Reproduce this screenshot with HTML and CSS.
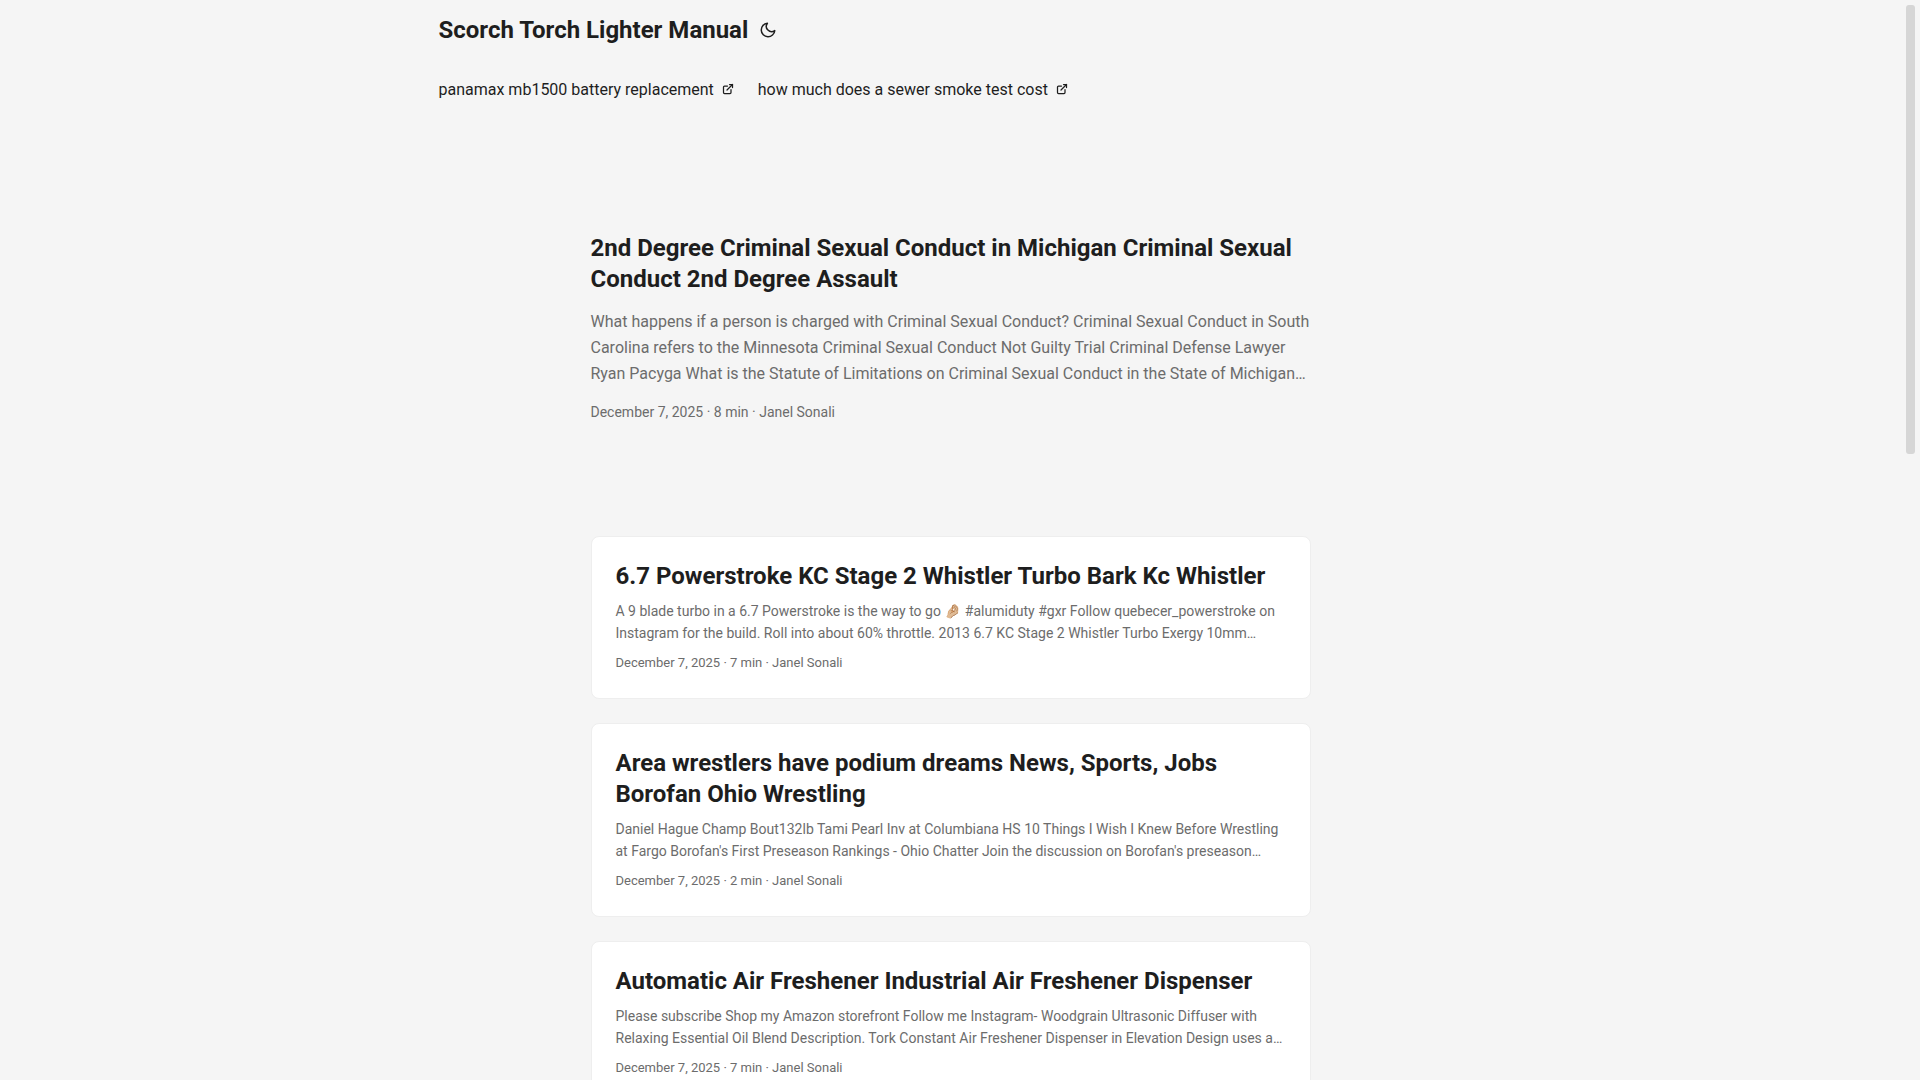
FILE: index.html
```html
<!DOCTYPE html>
<html lang="en">
<head>
<meta charset="utf-8">
<meta name="viewport" content="width=device-width, initial-scale=1">
<title>Scorch Torch Lighter Manual</title>
<link rel="stylesheet" href="styles.css">
</head>
<body>
<div class="page">
  <header class="header">
    <nav class="nav">
      <div class="logo">
        <a href="#">Scorch Torch Lighter Manual</a>
        <button class="theme-toggle" type="button" aria-label="Toggle theme">
          <svg width="18" height="18" viewBox="0 0 24 24" fill="none" stroke="currentColor" stroke-width="2" stroke-linecap="round" stroke-linejoin="round"><path d="M21 12.79A9 9 0 1 1 11.21 3 7 7 0 0 0 21 12.79z"/></svg>
        </button>
      </div>
      <ul class="menu">
        <li><a href="#">panamax mb1500 battery replacement&nbsp;
          <svg width="12" height="12" viewBox="0 0 24 24" fill="none" stroke="currentColor" stroke-width="2.5" stroke-linecap="round" stroke-linejoin="round" shape-rendering="geometricPrecision"><path d="M18 13v6a2 2 0 01-2 2H5a2 2 0 01-2-2V8a2 2 0 012-2h6"/><path d="M15 3h6v6"/><path d="M10 14L21 3"/></svg></a></li>
        <li><a href="#">how much does a sewer smoke test cost&nbsp;
          <svg width="12" height="12" viewBox="0 0 24 24" fill="none" stroke="currentColor" stroke-width="2.5" stroke-linecap="round" stroke-linejoin="round" shape-rendering="geometricPrecision"><path d="M18 13v6a2 2 0 01-2 2H5a2 2 0 01-2-2V8a2 2 0 012-2h6"/><path d="M15 3h6v6"/><path d="M10 14L21 3"/></svg></a></li>
      </ul>
    </nav>
  </header>
  <main class="main">
    <article class="first-entry">
      <h2 class="entry-title"><a href="#">2nd Degree Criminal Sexual Conduct in Michigan Criminal Sexual Conduct 2nd Degree Assault</a></h2>
      <p class="entry-content">What happens if a person is charged with Criminal Sexual Conduct? Criminal Sexual Conduct in South Carolina refers to the Minnesota Criminal Sexual Conduct Not Guilty Trial Criminal Defense Lawyer Ryan Pacyga What is the Statute of Limitations on Criminal Sexual Conduct in the State of Michigan…</p>
      <footer class="entry-footer">December 7, 2025 · 8 min · Janel Sonali</footer>
    </article>
    <article class="post-entry">
      <h2 class="entry-title"><a href="#">6.7 Powerstroke KC Stage 2 Whistler Turbo Bark Kc Whistler</a></h2>
      <p class="entry-content">A 9 blade turbo in a 6.7 Powerstroke is the way to go 🤌🏼 #alumiduty #gxr Follow quebecer_powerstroke on Instagram for the build. Roll into about 60% throttle. 2013 6.7 KC Stage 2 Whistler Turbo Exergy 10mm…</p>
      <footer class="entry-footer">December 7, 2025 · 7 min · Janel Sonali</footer>
    </article>
    <article class="post-entry">
      <h2 class="entry-title"><a href="#">Area wrestlers have podium dreams News, Sports, Jobs Borofan Ohio Wrestling</a></h2>
      <p class="entry-content">Daniel Hague Champ Bout132lb Tami Pearl Inv at Columbiana HS 10 Things I Wish I Knew Before Wrestling at Fargo Borofan's First Preseason Rankings - Ohio Chatter Join the discussion on Borofan's preseason…</p>
      <footer class="entry-footer">December 7, 2025 · 2 min · Janel Sonali</footer>
    </article>
    <article class="post-entry">
      <h2 class="entry-title"><a href="#">Automatic Air Freshener Industrial Air Freshener Dispenser</a></h2>
      <p class="entry-content">Please subscribe Shop my Amazon storefront Follow me Instagram- Woodgrain Ultrasonic Diffuser with Relaxing Essential Oil Blend Description. Tork Constant Air Freshener Dispenser in Elevation Design uses a…</p>
      <footer class="entry-footer">December 7, 2025 · 7 min · Janel Sonali</footer>
    </article>
  </main>
</div>
<div class="scrollbar" aria-hidden="true"><div class="scrollbar-thumb"></div></div>
</body>
</html>
```
FILE: styles.css
```css
:root {
  --gap: 24px;
  --theme: #f5f5f5;
  --entry: #fff;
  --primary: #1e1e1e;
  --secondary: #6c6c6c;
  --tertiary: #d6d6d6;
  --border: #eee;
}

* { box-sizing: border-box; margin: 0; padding: 0; }

body {
  display: flex;
  height: 100vh;
  overflow: hidden;
  background: var(--theme);
  color: var(--primary);
  font: 16px/26px Roboto, "Noto Sans", sans-serif;
}

a { color: inherit; text-decoration: none; }

/* The page scrolls inside its own column, beside a custom scrollbar */
.page { flex: 1; min-width: 0; overflow-y: auto; scrollbar-width: none; }

.scrollbar { width: 19px; padding: 5px; }
.scrollbar-thumb { height: 42%; border-radius: 3px; background: var(--tertiary); }

.nav {
  max-width: 1072px;
  margin: 0 auto;
  padding: 0 var(--gap);
  line-height: 60px;
}

.logo { display: flex; align-items: center; font-size: 24px; font-weight: 700; }

.theme-toggle {
  display: flex;
  margin: 0 4px;
  padding: 7px;
  border: 0;
  background: none;
  color: inherit;
}

.menu { display: flex; flex-wrap: wrap; gap: 0 var(--gap); list-style: none; }

.main {
  max-width: 768px;
  margin: 0 auto;
  padding: var(--gap);
}

.first-entry {
  display: flex;
  flex-direction: column;
  justify-content: center;
  min-height: 320px;
  margin: var(--gap) 0 48px;
}

.entry-title { font-size: 24px; line-height: 31px; }
.entry-content { margin: 8px 0; color: var(--secondary); font-size: 14px; line-height: 22px; }
.entry-footer { color: var(--secondary); font-size: 13px; line-height: 22px; }

.first-entry .entry-content { margin: 14px 0; font-size: 16px; line-height: 26px; }
.first-entry .entry-footer { font-size: 14px; }

.post-entry {
  margin-bottom: var(--gap);
  padding: var(--gap);
  border: 1px solid var(--border);
  border-radius: 8px;
  background: var(--entry);
}
```
